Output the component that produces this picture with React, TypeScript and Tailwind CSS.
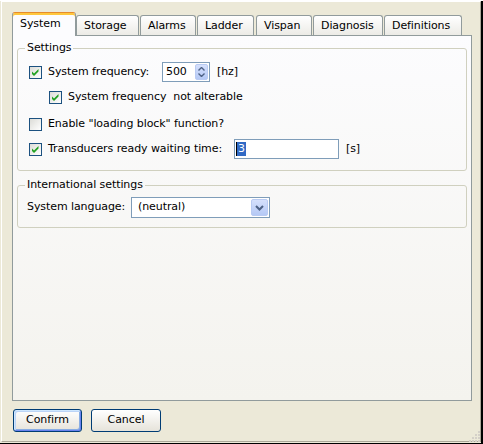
import React from "react";

const font = { fontFamily: '"DejaVu Sans", "Liberation Sans", sans-serif' };

function Check({ checked }: { checked: boolean }) {
  return (
    <div className="w-[13px] h-[13px] shrink-0 border border-[#1C5180] bg-linear-to-br from-[#DCDCD7] to-white flex items-center justify-center">
      {checked && (
        <svg width="11" height="11" viewBox="0 0 11 11">
          <path d="M2 4.5 L4 6.5 L8.5 2 L8.5 4.5 L4 9 L2 7 Z" fill="#21A121" />
        </svg>
      )}
    </div>
  );
}

function Tab({ label, w, ml, selected }: { label: string; w: string; ml: string; selected?: boolean }) {
  if (selected) {
    return (
      <div
        className={`${w} ${ml} relative z-10 h-[24px] -mb-px border border-b-0 border-[#919B9C] border-t-[#E68B2C] rounded-t-[3px] bg-[#FCFCFE] shadow-[inset_0_2px_0_#FFC73C] pl-[7px] pt-[4px] leading-[14px]`}
      >
        {label}
      </div>
    );
  }
  return (
    <div
      className={`${w} ${ml} h-[20px] border border-b-0 border-[#919B9C] rounded-t-[3px] bg-linear-to-b from-white to-[#ECEBE6] pl-[7px] pt-[3px] leading-[14px]`}
    >
      {label}
    </div>
  );
}

function XPButton({ label, def, w, cls }: { label: string; def?: boolean; w: string; cls?: string }) {
  return (
    <div
      className={`${w} ${cls ?? ""} h-[23px] rounded-[3px] border border-[#003C74] bg-linear-to-b from-white to-[#E6E3DA] flex items-center justify-center ${
        def
          ? "shadow-[inset_1px_1px_0_#CEE7FF,inset_-1px_-1px_0_#6982EE,inset_2px_2px_0_#BCD4F6,inset_-2px_-2px_0_#89ADE4]"
          : ""
      }`}
    >
      {label}
    </div>
  );
}

export default function App() {
  return (
    <div
      className="relative w-[483px] h-[444px] bg-[#ECE9D8] border-r-2 border-b-2 border-black text-[11px] tracking-[-0.08px] text-black"
      style={font}
    >
      <div className="h-[441px] w-[480px] ml-px mt-px border border-l-white border-t-white border-r-[#ACA899] border-b-[#ACA899] pl-[10px] pt-[10px] pr-[8px]">
        {/* tabs */}
        <div className="flex items-end h-[23px]">
          <Tab label="System" w="w-[64px]" ml="ml-0" selected />
          <Tab label="Storage" w="w-[63px]" ml="ml-0" />
          <Tab label="Alarms" w="w-[56px]" ml="ml-px" />
          <Tab label="Ladder" w="w-[57px]" ml="ml-px" />
          <Tab label="Vispan" w="w-[56px]" ml="ml-[2px]" />
          <Tab label="Diagnosis" w="w-[70px]" ml="ml-px" />
          <Tab label="Definitions" w="w-[78px]" ml="ml-px" />
        </div>
        {/* panel */}
        <div className="h-[366px] border border-[#919B9C] bg-linear-to-b from-[#FCFCFE] to-[#F4F3EE] px-[4px] pt-[5px]">
          <fieldset className="border border-[#D0D0BF] rounded-[3px] pb-[11px]">
            <legend className="ml-[7px] px-[2px] leading-[14px]">Settings</legend>
            <div className="pt-[7px]">
              <div className="flex items-center h-[20px] pl-[11px]">
                <Check checked />
                <span className="ml-[6px] w-[114px] whitespace-nowrap">System frequency:</span>
                <div className="w-[48px] h-[20px] border border-[#7F9DB9] bg-white flex items-center relative">
                  <span className="pl-[3px]">500</span>
                  <div className="absolute right-px top-px bottom-px w-[13px] rounded-[2px] bg-linear-to-b from-[#D5E0FC] to-[#B5C9F5] border border-[#B9CBF3] flex flex-col items-center justify-center gap-[2px]">
                    <svg width="7" height="4" viewBox="0 0 7 4">
                      <path d="M0.5 3.5 L3.5 0.5 L6.5 3.5" stroke="#4D6185" strokeWidth="1.4" fill="none" />
                    </svg>
                    <svg width="7" height="4" viewBox="0 0 7 4">
                      <path d="M0.5 0.5 L3.5 3.5 L6.5 0.5" stroke="#4D6185" strokeWidth="1.4" fill="none" />
                    </svg>
                  </div>
                </div>
                <span className="ml-[7px]">[hz]</span>
              </div>
              <div className="flex items-center h-[13px] mt-[9px] pl-[31px]">
                <Check checked />
                <span className="ml-[6px] whitespace-pre">System frequency  not alterable</span>
              </div>
              <div className="flex items-center h-[13px] mt-[14px] pl-[11px]">
                <Check checked={false} />
                <span className="ml-[6px] whitespace-nowrap">Enable "loading block" function?</span>
              </div>
              <div className="flex items-center h-[20px] mt-[8px] pl-[11px]">
                <Check checked />
                <span className="ml-[6px] w-[186px] whitespace-nowrap">Transducers ready waiting time:</span>
                <div className="w-[105px] h-[20px] border border-[#7F9DB9] bg-white flex items-center pl-[1px]">
                  <div className="w-px h-[14px] bg-black" />
                  <span className="bg-[#316AC5] text-white leading-[14px] px-px">3</span>
                </div>
                <span className="ml-[7px]">[s]</span>
              </div>
            </div>
          </fieldset>
          <fieldset className="mt-[7px] border border-[#D0D0BF] rounded-[3px] pb-[9px]">
            <legend className="ml-[7px] px-[2px] leading-[14px]">International settings</legend>
            <div className="pt-[5px] pl-[9px] flex items-center h-[26px]">
              <span className="w-[104px] whitespace-nowrap">System language:</span>
              <div className="w-[139px] h-[21px] border border-[#7F9DB9] bg-white flex items-center relative">
                <span className="pl-[6px]">(neutral)</span>
                <div className="absolute right-px top-px bottom-px w-[17px] rounded-[2px] bg-linear-to-b from-[#D5E0FC] to-[#B5C9F5] border border-[#B9CBF3] flex items-center justify-center">
                  <svg width="9" height="6" viewBox="0 0 9 6">
                    <path d="M1 1 L4.5 4.5 L8 1" stroke="#4D6185" strokeWidth="2" fill="none" />
                  </svg>
                </div>
              </div>
            </div>
          </fieldset>
        </div>
        {/* buttons */}
        <div className="flex mt-[8px] pl-px">
          <XPButton label="Confirm" def w="w-[69px]" />
          <XPButton label="Cancel" w="w-[70px]" cls="ml-[9px]" />
        </div>
      </div>
      {/* resize grip */}
      <svg className="absolute right-[1px] bottom-[1px]" width="12" height="12" viewBox="0 0 12 12">
        {[
          [9, 1],
          [6, 4],
          [9, 4],
          [3, 7],
          [6, 7],
          [9, 7],
          [0, 10],
          [3, 10],
          [6, 10],
          [9, 10],
        ].map(([x, y], i) => (
          <rect key={i} x={x + 1} y={y} width="2" height="2" fill="#D4D0C8" />
        ))}
      </svg>
    </div>
  );
}
